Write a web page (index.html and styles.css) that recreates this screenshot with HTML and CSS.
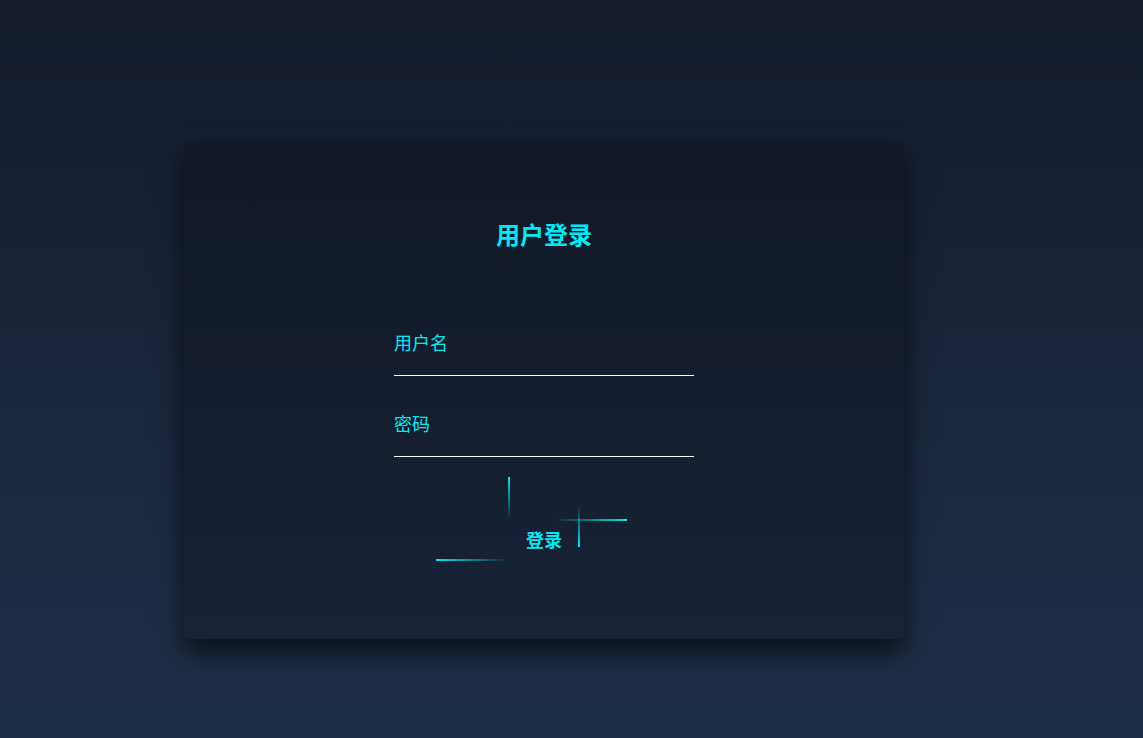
FILE: index.html
```html
<!DOCTYPE html>
<html lang="zh-CN">
<head>
<meta charset="utf-8">
<title>用户登录</title>
<link rel="stylesheet" href="styles.css">
</head>
<body>
  <div class="page">
    <div class="login-box">
      <h2 class="title">用户登录</h2>
      <form class="form">
        <div class="field">
          <label class="label">用户名</label>
        </div>
        <div class="field">
          <label class="label">密码</label>
        </div>
        <div class="actions">
          <a class="btn">
            <span class="line line-top"></span>
            <span class="line line-right"></span>
            <span class="line line-bottom"></span>
            <span class="line line-left"></span>
            登录
          </a>
        </div>
      </form>
    </div>
  </div>
</body>
</html>
```
FILE: styles.css
```css
* { box-sizing: border-box; }
html, body { margin: 0; padding: 0; height: 100%; }
body {
  font-family: "Noto Sans CJK SC", "Noto Sans", sans-serif;
  background: linear-gradient(#141c2b, #1f2e47);
  overflow: hidden;
}
.page {
  padding: 141px 0 0 184px;
}
.login-box {
  width: 720px;
  height: 498px;
  padding-top: 77px;
  background: rgba(0, 0, 0, 0.2);
  box-shadow: 0 15px 25px rgba(0, 0, 0, 0.6);
}
.title {
  margin: 0 0 45px;
  text-align: center;
  font-size: 24px;
  line-height: 32px;
  font-weight: 700;
  color: #03e9f4;
}
.form {
  width: 300px;
  margin: 0 auto;
}
.field {
  padding-top: 35px;
  border-bottom: 1px solid #fff;
}
.label {
  display: block;
  font-size: 18px;
  line-height: 24px;
  padding-bottom: 21px;
  color: #03e9f4;
}
.actions {
  display: flex;
  justify-content: center;
  margin-top: 62px;
}
.btn {
  position: relative;
  display: block;
  width: 72px;
  height: 42px;
  padding: 9px 0 11px;
  text-align: center;
  font-size: 18px;
  line-height: 22px;
  font-weight: 700;
  color: #03e9f4;
}
.line {
  position: absolute;
  display: block;
}
.line-top {
  top: 0;
  left: 47px;
  width: 72px;
  height: 2px;
  background: linear-gradient(90deg, transparent, #03e9f4);
}
.line-right {
  right: 0;
  top: -14px;
  width: 2px;
  height: 42px;
  background: linear-gradient(180deg, transparent, #03e9f4);
}
.line-bottom {
  bottom: 0;
  left: -72px;
  width: 72px;
  height: 2px;
  background: linear-gradient(270deg, transparent, #03e9f4);
}
.line-left {
  left: 0;
  top: -42px;
  width: 2px;
  height: 42px;
  background: linear-gradient(360deg, transparent, #03e9f4);
}
```
